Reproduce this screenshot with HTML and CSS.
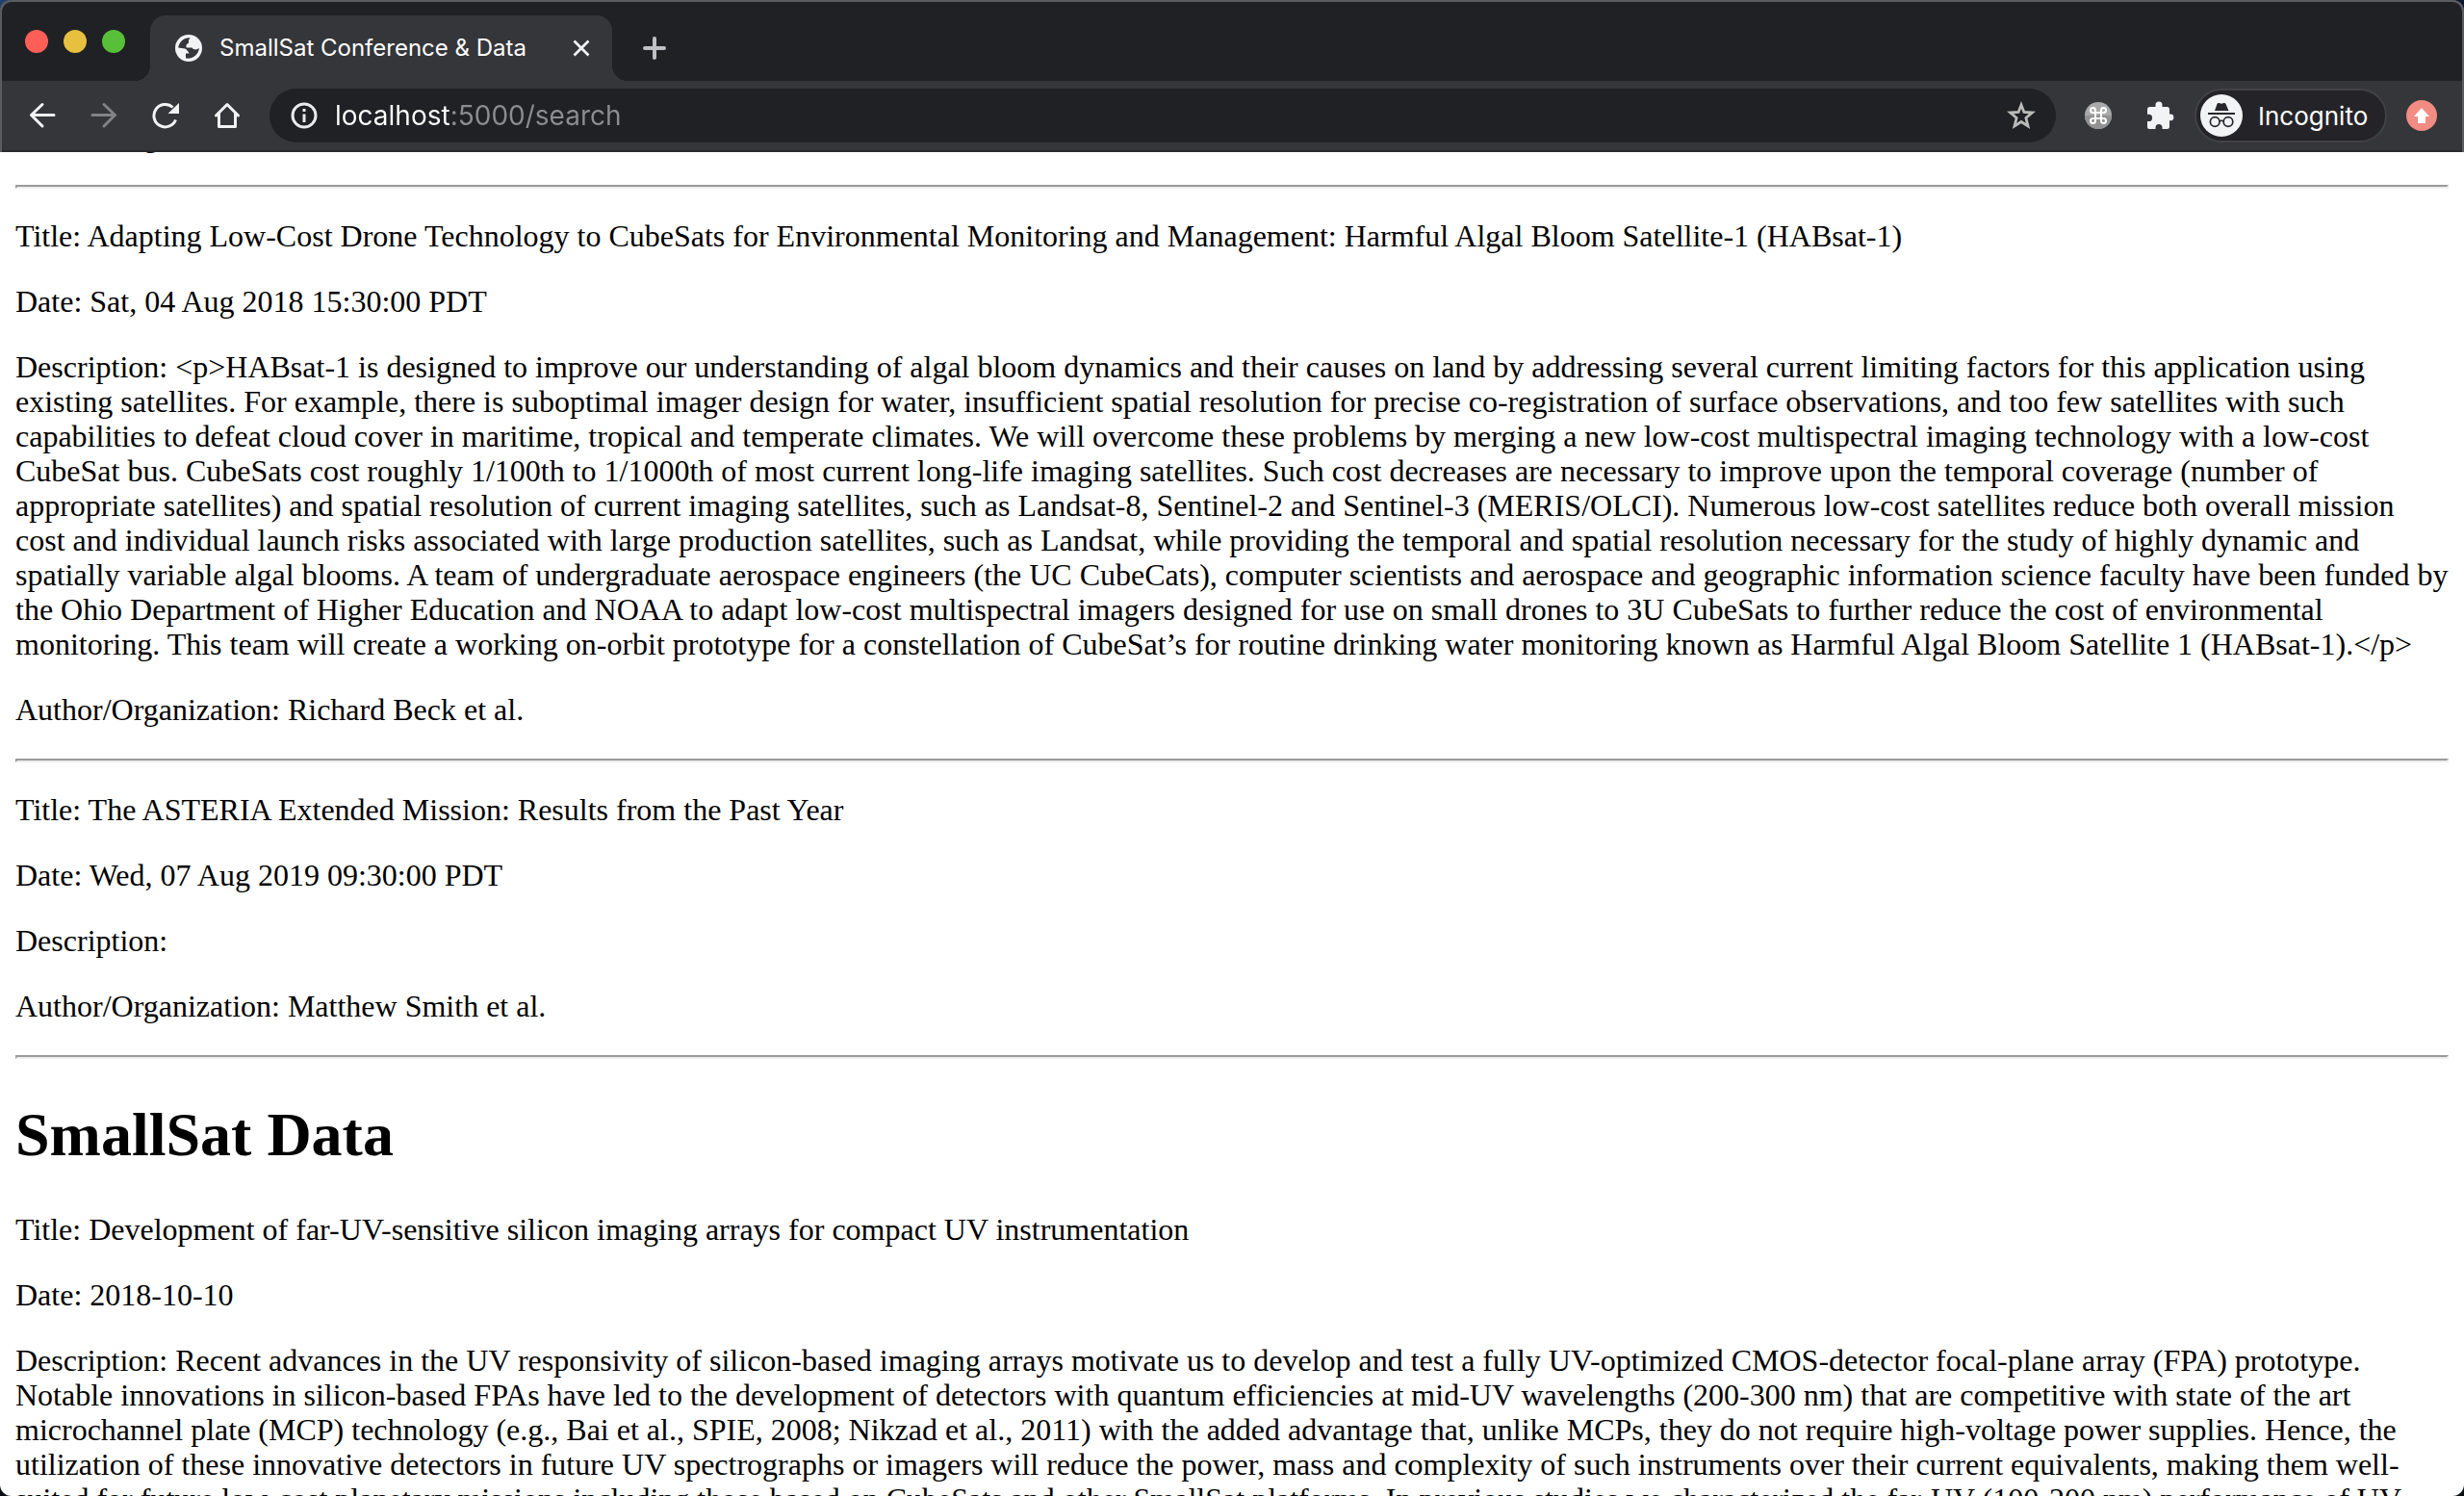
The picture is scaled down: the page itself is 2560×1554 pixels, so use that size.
FILE: index.html
```html
<!DOCTYPE html>
<html lang="en">
<head>
<meta charset="utf-8">
<title>SmallSat Conference &amp; Data</title>
<link rel="stylesheet" href="styles.css">
</head>
<body>
<div class="window">
  <header class="chrome">
    <div class="tab-strip">
      <div class="lights">
        <button class="light light-close" aria-label="Close window"></button>
        <button class="light light-minimize" aria-label="Minimize window"></button>
        <button class="light light-zoom" aria-label="Zoom window"></button>
      </div>
      <div class="tab">
        <svg class="favicon" viewBox="0 0 28 28" aria-hidden="true">
          <circle cx="14" cy="14" r="14" fill="#f1f3f4"/>
          <path d="M15 3.200C9 3 4 7.500 3.200 13.500L10 14.500C12 15 12.500 17 13.500 17.500L14.500 19.500H11V24.500C18 25.500 24 21.500 24.900 14L22 15.500C19.500 15.500 18 14.500 17.500 13.500H11.500V11C11.500 9.500 14 9.500 14 8.500V5.500C14 4.500 16 5 15 3.200Z" fill="#35363a"/>
        </svg>
        <span class="tab-title">SmallSat Conference &amp; Data</span>
        <button class="tab-close" aria-label="Close tab">
          <svg width="18" height="18" viewBox="0 0 18 18" fill="none" stroke="#f1f3f4" stroke-width="2.800"><path d="M1.500 1.500 16.500 16.500M16.500 1.500 1.500 16.500"/></svg>
        </button>
      </div>
      <button class="new-tab" aria-label="New tab">
        <svg width="24" height="24" viewBox="0 0 24 24" fill="none" stroke="#bdc1c6" stroke-width="4" stroke-linecap="round"><path d="M12 2V22M2 12H22"/></svg>
      </button>
    </div>
    <div class="toolbar">
      <button class="tool" aria-label="Back">
        <svg width="28" height="28" viewBox="0 0 28 28" fill="none" stroke="#f1f3f4" stroke-width="3" stroke-linecap="round" stroke-linejoin="round"><path d="M26 13.500H2.500M14 2.500 2.500 13.500 14 25"/></svg>
      </button>
      <button class="tool" aria-label="Forward" disabled>
        <svg width="28" height="28" viewBox="0 0 28 28" fill="none" stroke="#818285" stroke-width="3" stroke-linecap="round" stroke-linejoin="round"><path d="M2 13.500H25.500M14 2.500 25.500 13.500 14 25"/></svg>
      </button>
      <button class="tool" aria-label="Reload">
        <svg width="28" height="28" viewBox="0 0 28 28"><path d="M24.500 18.500A11.700 11.700 0 1 1 21.500 5.500" fill="none" stroke="#f1f3f4" stroke-width="3"/><path d="M28 1V12H16.500Z" fill="#f1f3f4"/></svg>
      </button>
      <button class="tool" aria-label="Home">
        <svg width="28" height="28" viewBox="0 0 28 28" fill="none" stroke="#f1f3f4" stroke-width="3" stroke-linecap="round" stroke-linejoin="round"><path d="M2.500 14 14 2.500 25.500 14M5.500 12V25.500H22.500V12"/></svg>
      </button>
      <form class="omnibox">
        <svg width="28" height="28" viewBox="0 0 28 28" aria-hidden="true"><circle cx="14" cy="14" r="12" fill="none" stroke="#e8eaed" stroke-width="3"/><path d="M14 12.500V21M14 7V10" stroke="#e8eaed" stroke-width="3"/></svg>
        <input class="address" type="text" value="localhost:5000/search" aria-label="Address" spellcheck="false">
        <button class="star" type="button" aria-label="Bookmark this page">
          <svg width="30" height="30" viewBox="0 0 30 30" fill="none" stroke="#bbbbb9" stroke-width="2.800"><path d="M15 4 17.900 11.500 26.400 12 19.900 17.500 22 26 15 21.500 8 26 10.100 17.500 3.600 12 12.100 11.500Z"/></svg>
        </button>
      </form>
      <button class="tool" aria-label="Keyboard shortcuts extension">
        <svg width="30" height="30" viewBox="0 0 30 30"><circle cx="15" cy="15" r="14" fill="#a9a9a9"/><path d="M1 15A14 14 0 0 0 29 15Z" fill="#929292"/><path d="M12 12H18V18H12ZM12 12H9.500A2.500 2.500 0 1 1 12 9.500ZM18 12V9.500A2.500 2.500 0 1 1 20.500 12ZM18 18H20.500A2.500 2.500 0 1 1 18 20.500ZM12 18V20.500A2.500 2.500 0 1 1 9.500 18Z" fill="none" stroke="#fff" stroke-width="2"/></svg>
      </button>
      <button class="tool" aria-label="Extensions">
        <svg width="30" height="30" viewBox="0 0 30 30"><path d="M5 6H10.500V4A3.500 3.500 0 0 1 17.500 4V6H22.500A2.500 2.500 0 0 1 25 8.500V13.500H26A3.400 3.400 0 0 1 26 20.300H25V26.500A2.500 2.500 0 0 1 22.500 29H17.500V27.500A3.500 3.500 0 0 0 10.500 27.500V29H4A2 2 0 0 1 2 27V21H3.500A3.600 3.600 0 0 0 3.500 13.800H2V8.500A2.500 2.500 0 0 1 5 6Z" fill="#f1f3f4"/></svg>
      </button>
      <button class="profile">
        <svg width="44" height="44" viewBox="0 0 44 44" aria-hidden="true"><circle cx="22" cy="22" r="22" fill="#f1f3f4"/><path d="M15 17 17.500 10Q18 8.500 19.500 9L22 9.800 24.500 9Q26 8.500 26.500 10L29.500 17Z" fill="#27272b"/><path d="M8 20H36" stroke="#27272b" stroke-width="2"/><g fill="none" stroke="#27272b" stroke-width="1.700"><circle cx="15.200" cy="28.500" r="4.800"/><circle cx="29" cy="28.500" r="4.800"/><path d="M20 28Q22 26.500 24.200 28"/></g></svg>
        <span>Incognito</span>
      </button>
      <button class="tool" aria-label="Update">
        <svg width="32" height="32" viewBox="0 0 32 32"><circle cx="16" cy="16" r="16" fill="#f28b82"/><path d="M16 8 24 17H20V24H12V17H8Z" fill="#fff"/></svg>
      </button>
    </div>
  </header>
  <main class="page">
    <article class="scrolled">
      <p>Author/Organization:</p>
    </article>
    <hr>
    <article>
      <p>Title: Adapting Low-Cost Drone Technology to CubeSats for Environmental Monitoring and Management: Harmful Algal Bloom Satellite-1 (HABsat-1)</p>
      <p>Date: Sat, 04 Aug 2018 15:30:00 PDT</p>
      <p>Description: &lt;p&gt;HABsat-1 is designed to improve our understanding of algal bloom dynamics and their causes on land by addressing several current limiting factors for this application using existing satellites. For example, there is suboptimal imager design for water, insufficient spatial resolution for precise co-registration of surface observations, and too few satellites with such capabilities to defeat cloud cover in maritime, tropical and temperate climates. We will overcome these problems by merging a new low-cost multispectral imaging technology with a low-cost CubeSat bus. CubeSats cost roughly 1/100th to 1/1000th of most current long-life imaging satellites. Such cost decreases are necessary to improve upon the temporal coverage (number of appropriate satellites) and spatial resolution of current imaging satellites, such as Landsat-8, Sentinel-2 and Sentinel-3 (MERIS/OLCI). Numerous low-cost satellites reduce both overall mission cost and individual launch risks associated with large production satellites, such as Landsat, while providing the temporal and spatial resolution necessary for the study of highly dynamic and spatially variable algal blooms. A team of undergraduate aerospace engineers (the UC CubeCats), computer scientists and aerospace and geographic information science faculty have been funded by the Ohio Department of Higher Education and NOAA to adapt low-cost multispectral imagers designed for use on small drones to 3U CubeSats to further reduce the cost of environmental monitoring. This team will create a working on-orbit prototype for a constellation of CubeSat’s for routine drinking water monitoring known as Harmful Algal Bloom Satellite 1 (HABsat-1).&lt;/p&gt;</p>
      <p>Author/Organization: Richard Beck et al.</p>
    </article>
    <hr>
    <article>
      <p>Title: The ASTERIA Extended Mission: Results from the Past Year</p>
      <p>Date: Wed, 07 Aug 2019 09:30:00 PDT</p>
      <p>Description:</p>
      <p>Author/Organization: Matthew Smith et al.</p>
    </article>
    <hr>
    <h1>SmallSat Data</h1>
    <article>
      <p>Title: Development of far-UV-sensitive silicon imaging arrays for compact UV instrumentation</p>
      <p>Date: 2018-10-10</p>
      <p>Description: Recent advances in the UV responsivity of silicon-based imaging arrays motivate us to develop and test a fully UV-optimized CMOS-detector focal-plane array (FPA) prototype. Notable innovations in silicon-based FPAs have led to the development of detectors with quantum efficiencies at mid-UV wavelengths (200-300 nm) that are competitive with state of the art microchannel plate (MCP) technology (e.g., Bai et al., SPIE, 2008; Nikzad et al., 2011) with the added advantage that, unlike MCPs, they do not require high-voltage power supplies. Hence, the utilization of these innovative detectors in future UV spectrographs or imagers will reduce the power, mass and complexity of such instruments over their current equivalents, making them well-suited for future low-cost planetary missions including those based on CubeSats and other SmallSat platforms. In previous studies we characterized the far-UV (100-200 nm) performance of UV-</p>
    </article>
  </main>
</div>
</body>
</html>
```
FILE: styles.css
```css
* {
  box-sizing: border-box;
}

body {
  margin: 0;
  background: linear-gradient(90deg, #24406f, #0a1734) 0 0 / 100% 100px no-repeat #0b0c14;
  overflow: hidden;
}

button,
input {
  margin: 0;
  padding: 0;
  border: 0;
  background: none;
  color: inherit;
  font: inherit;
}

svg {
  display: block;
  flex: none;
}

.window {
  display: flex;
  flex-direction: column;
  height: 100vh;
  overflow: hidden;
  border-radius: 12px;
  background: #fff;
}

/* Browser frame */
.chrome {
  position: relative;
  z-index: 1;
  flex: none;
  background: #202124;
  color: #fff;
  font-family: Inter, "Liberation Sans", sans-serif;
}

.chrome::after {
  content: "";
  position: absolute;
  inset: 0;
  border: 2px solid #5b5c5f;
  border-bottom: 0;
  border-radius: 12px 12px 0 0;
  pointer-events: none;
}

.tab-strip {
  display: flex;
  height: 84px;
  padding: 16px 26px 0;
}

.lights {
  display: flex;
  gap: 16px;
  width: 130px;
  padding-top: 15px;
}

.light {
  width: 24px;
  height: 24px;
  border-radius: 50%;
}

.light-close {
  background: #ff5f57;
}

.light-minimize {
  background: #e6c03e;
}

.light-zoom {
  background: #58c038;
}

.tab {
  position: relative;
  display: flex;
  align-items: center;
  width: 480px;
  padding: 0 23px 0 26px;
  border-radius: 16px 16px 0 0;
  background: #35363a;
}

.tab::before,
.tab::after {
  content: "";
  position: absolute;
  bottom: 0;
  width: 16px;
  height: 16px;
}

.tab::before {
  right: 100%;
  background: radial-gradient(circle at 0 0, #202124 16px, #35363a 16px);
}

.tab::after {
  left: 100%;
  background: radial-gradient(circle at 100% 0, #202124 16px, #35363a 16px);
}

.favicon {
  width: 28px;
  height: 28px;
}

.tab-title {
  flex: 1;
  margin-left: 18px;
  font-size: 24px;
  line-height: 32px;
  white-space: nowrap;
}

.new-tab {
  margin-left: 32px;
}

/* Navigation bar */
.toolbar {
  display: flex;
  align-items: center;
  height: 74px;
  padding: 0 12px;
  border-bottom: 2px solid #28292c;
  background: #35363a;
}

.tool {
  display: flex;
  flex: none;
  align-items: center;
  justify-content: center;
  width: 64px;
  height: 56px;
}

.omnibox {
  display: flex;
  flex: 1;
  align-items: center;
  height: 56px;
  margin: 0 12px;
  padding: 0 21px 0 22px;
  border-radius: 28px;
  background: #202124;
}

.address {
  flex: 1;
  min-width: 0;
  margin-left: 18px;
  font-size: 28px;
  line-height: 36px;
  color: transparent;
  background: linear-gradient(90deg, #fff 119px, #8c8d90 119px);
  -webkit-background-clip: text;
  background-clip: text;
}

.profile {
  display: flex;
  flex: none;
  align-items: center;
  gap: 16px;
  width: 200px;
  height: 56px;
  margin: 0 4px;
  padding: 0 4px;
  border: 2px solid #414146;
  border-radius: 28px;
  background: #242428;
  font-size: 26px;
}

/* Search results */
.page {
  flex: 1;
  min-height: 0;
  padding: 0 16px;
  overflow: hidden;
  color: #000;
  font-family: "Liberation Serif", "Times New Roman", serif;
  font-size: 32px;
  line-height: 36px;
}

.page article {
  display: flex;
  flex-direction: column;
  gap: 32px;
}

.page p {
  margin: 0;
}

/* Last line of the entry above, scrolled under the navigation bar */
.page .scrolled {
  margin-top: -35px;
}

.page hr {
  margin: 33px 0 31px;
  border: 2px solid;
  border-color: #9a9a9a #eee #eee #9a9a9a;
}

.page h1 {
  margin: 42px 0 44px;
  font-size: 64px;
  line-height: 73px;
}
```
